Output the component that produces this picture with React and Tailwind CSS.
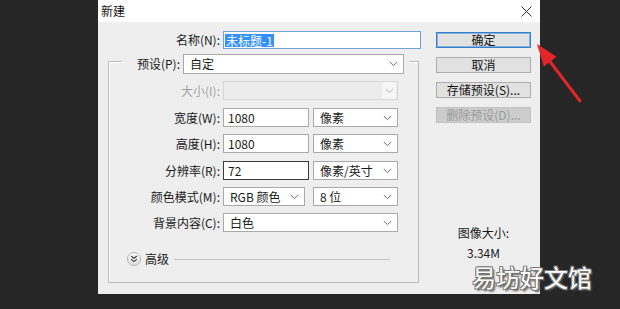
import React from "react";

const Chevron = ({ color = "#6b6b6b" }) => (
  <svg width="9" height="6" viewBox="0 0 9 6" className="shrink-0">
    <path d="M0.8 1 L4.5 4.6 L8.2 1" fill="none" stroke={color} strokeWidth="1" />
  </svg>
);

const Select = ({ w, text, h = "h-[19px]", disabled = false }) => (
  <div
    className={`${w} ${h} flex items-center justify-between border ${
      disabled ? "border-[#d6d6d6] bg-[#ececec]" : "border-[#a9a9a9] bg-white"
    } pl-[6px] pr-[5px]`}
  >
    <span className="leading-none text-[12px] text-[#1a1a1a] whitespace-nowrap">{text}</span>
    {disabled ? (
      <div className="h-full w-[14px] bg-[#f6f6f6] flex items-center justify-center -mr-[4px]">
        <Chevron color="#b5b5b5" />
      </div>
    ) : (
      <Chevron />
    )}
  </div>
);

const Input = ({ w, text, dark = false }) => (
  <div
    className={`${w} h-[19px] flex items-center bg-white border ${
      dark ? "border-[#3a3a3a]" : "border-[#a9a9a9]"
    } pl-[4px]`}
  >
    <span className="leading-none text-[12px] text-[#1a1a1a]">{text}</span>
  </div>
);

const Row = ({ label, children, mt, disabled = false }) => (
  <div className={`flex items-center h-[19px] ${mt}`}>
    <div
      className={`w-[111px] text-right text-[12px] leading-none whitespace-nowrap ${
        disabled ? "text-[#a3a3a3]" : "text-[#1a1a1a]"
      }`}
    >
      {label}
    </div>
    <div className="ml-[3px] flex items-center">{children}</div>
  </div>
);

const Button = ({ children, primary = false, disabled = false }) => (
  <div
    className={`w-[95px] h-[16px] flex items-center justify-center text-[12px] leading-none border ${
      primary
        ? "border-[#3b7dc4] bg-[#e1e1e1] text-[#111] shadow-[inset_0_0_0_1px_#7eb4ea]"
        : disabled
        ? "border-[#c4c4c4] bg-[#cccccc] text-[#9a9a9a]"
        : "border-[#adadad] bg-[#e1e1e1] text-[#111]"
    }`}
  >
    {children}
  </div>
);

export default function App() {
  return (
    <div className="relative w-[620px] h-[309px] overflow-hidden bg-[#262626] font-['Noto_Sans_CJK_SC',sans-serif] pl-[98px]">
      <div className="w-[442px] h-[294px] bg-[#eeeeee] flex flex-col">
        {/* title bar */}
        <div className="h-[22px] bg-white flex items-center justify-between pl-[3px] pr-[8px]">
          <span className="text-[12px] leading-none text-[#111]">新建</span>
          <svg width="11" height="11" viewBox="0 0 11 11">
            <path d="M0.5 0.5 L10.5 10.5 M10.5 0.5 L0.5 10.5" stroke="#333" strokeWidth="1" />
          </svg>
        </div>
        {/* body */}
        <div className="flex flex-1">
          {/* left column */}
          <div className="w-[338px] flex flex-col">
            <div className="mt-[9px] flex items-center h-[18px]">
              <div className="w-[122px] text-right text-[12px] leading-none text-[#1a1a1a]">名称(N):</div>
              <div className="ml-[3px] w-[198px] h-[18px] bg-white border border-[#6fa3d6] flex items-center pl-[1px]">
                <span className="bg-[#3390ff] text-white text-[12px] leading-[13px] px-[1px]">未标题-1</span>
              </div>
            </div>
            {/* group box */}
            <div className="ml-[10px] mt-[12px] w-[311px] h-[222px] border border-[#bcbcbc] shadow-[inset_1px_1px_0_#ffffff] flex flex-col">
              <div className="-mt-[8px] ml-[13px] w-[287px] h-[20px] bg-[#eeeeee] flex items-center pr-[5px]">
                <div className="flex-1 text-right text-[12px] leading-none text-[#1a1a1a]">预设(P):</div>
                <div className="ml-[3px]">
                  <Select w="w-[221px]" h="h-[20px]" text="自定" />
                </div>
              </div>
              <Row label="大小(I):" mt="mt-[7px]" disabled>
                <Select w="w-[175px]" text="" disabled />
              </Row>
              <Row label="宽度(W):" mt="mt-[8px]">
                <Input w="w-[86px]" text="1080" />
                <div className="ml-[4px]">
                  <Select w="w-[85px]" text="像素" />
                </div>
              </Row>
              <Row label="高度(H):" mt="mt-[7px]">
                <Input w="w-[86px]" text="1080" />
                <div className="ml-[4px]">
                  <Select w="w-[85px]" text="像素" />
                </div>
              </Row>
              <Row label="分辨率(R):" mt="mt-[8px]">
                <Input w="w-[86px]" text="72" dark />
                <div className="ml-[4px]">
                  <Select w="w-[85px]" text="像素/英寸" />
                </div>
              </Row>
              <Row label="颜色模式(M):" mt="mt-[7px]">
                <Select w="w-[82px]" text="RGB 颜色" />
                <div className="ml-[8px]">
                  <Select w="w-[85px]" text="8 位" />
                </div>
              </Row>
              <Row label="背景内容(C):" mt="mt-[7px]">
                <Select w="w-[175px]" text="白色" />
              </Row>
              <div className="mt-[20px] h-[14px] flex items-center ml-[18px] mr-[28px]">
                <div className="w-[14px] h-[14px] rounded-full border border-[#b3b3b3] bg-gradient-to-b from-[#ffffff] to-[#dedede] flex items-center justify-center">
                  <svg width="8" height="8" viewBox="0 0 8 8">
                    <path d="M1.2 1 L4 3.4 L6.8 1 M1.2 4.2 L4 6.6 L6.8 4.2" fill="none" stroke="#333" strokeWidth="1.1" />
                  </svg>
                </div>
                <span className="ml-[4px] text-[12px] leading-none text-[#1a1a1a]">高级</span>
                <div className="ml-[5px] flex-1 h-px bg-[#c4c4c4]" />
              </div>
            </div>
          </div>
          {/* right column */}
          <div className="w-[95px] flex flex-col items-center">
            <div className="mt-[10px] flex flex-col gap-[9px]">
              <Button primary>确定</Button>
              <Button>取消</Button>
              <Button>存储预设(S)...</Button>
              <Button disabled>删除预设(D)...</Button>
            </div>
            <div className="mt-[102px] text-[12px] leading-[16px] text-[#1a1a1a] text-center">图像大小:</div>
            <div className="mt-[4px] text-[12px] leading-[16px] text-[#1a1a1a] text-center">3.34M</div>
          </div>
        </div>
      </div>

      {/* red arrow */}
      <svg className="absolute left-0 top-0 pointer-events-none" width="620" height="309" viewBox="0 0 620 309">
        <line x1="580" y1="101" x2="548" y2="59" stroke="#e2252b" strokeWidth="3" strokeLinecap="round" />
        <polygon points="537,44 556.6,56.8 543.8,66.4" fill="#e2252b" />
      </svg>

      {/* watermark */}
      <div className="absolute left-[472px] top-[264px] text-[24px] leading-[25px] text-white [text-shadow:1px_1px_0_#777,-1px_-1px_0_#777,1px_-1px_0_#777,-1px_1px_0_#777,2px_2px_2px_#444]">
        易坊好文馆
      </div>
    </div>
  );
}
